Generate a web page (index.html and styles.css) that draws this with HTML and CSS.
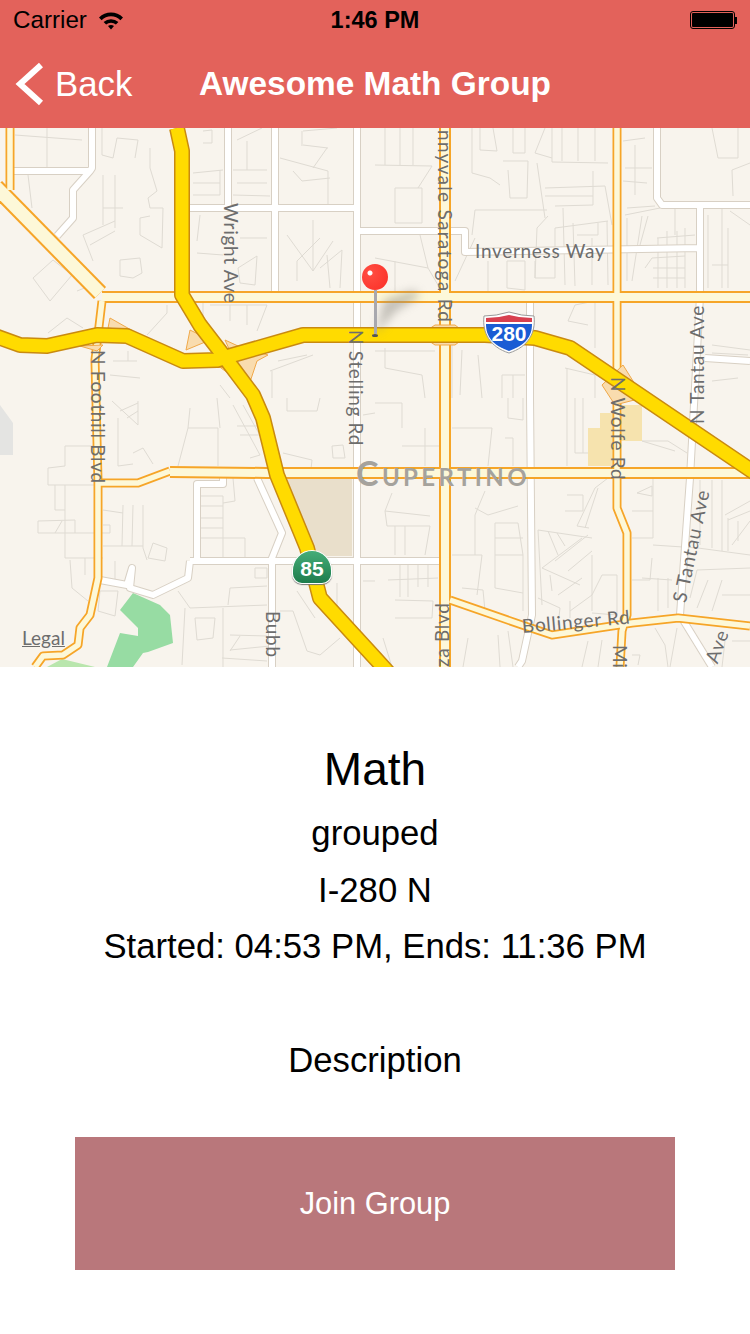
FILE: index.html
```html
<!DOCTYPE html>
<html lang="en">
<head>
    <meta charset="UTF-8">
    <meta name="viewport" content="width=device-width, initial-scale=1.0">
    <title>Awesome Math Group</title>
    <link rel="stylesheet" href="styles.css">
</head>
<body>
    <header class="top">
        <div class="status">
            <div class="status-left">
                <span class="carrier">Carrier</span>
                <svg class="wifi" width="26" height="19" viewBox="0 0 26 19">
                    <path d="M1 6.500 A17 17 0 0 1 25 6.500 L22.400 9.200 A13.400 13.400 0 0 0 3.600 9.200 Z"/>
                    <path d="M5.600 11 A11 11 0 0 1 20.400 11 L17.900 13.500 A7.600 7.600 0 0 0 8.100 13.500 Z"/>
                    <path d="M10 15 A5 5 0 0 1 16 15 L13 18.500 Z"/>
                </svg>
            </div>
            <div class="status-time">1:46 PM</div>
            <div class="status-right">
                <span class="battery"><span class="battery-fill"></span></span>
                <span class="battery-tip"></span>
            </div>
        </div>
        <nav class="navbar">
            <div class="back">
                <svg width="30" height="44" viewBox="0 0 30 44">
                    <path d="M27 3 L6 22 L27 41" fill="none" stroke="#fff" stroke-width="6"/>
                </svg>
                <span>Back</span>
            </div>
            <h1 class="nav-title">Awesome Math Group</h1>
        </nav>
    </header>

    <div class="map">
        <svg class="map-svg" width="750" height="539" viewBox="0 128 750 539">
            <defs>
                <g id="white-roads">
                    <path d="M13 171H90L92 168V128M90 171L73 190V218L57 236"/>
                    <path d="M190 208H358M228 128V208M275 128V296M357 128V667M357 231H465V252L700 248M700 203V296L692 441L690 478L680 615M657 128V198L662 205H750"/>
                    <path d="M530 300V398L532 615L522 661L518 667M705 358L750 361"/>
                    <path d="M190 561H442M197 561V484H223V478M100 580L127 585L132 568L130 588L153 595L188 578L190 561M257 478L282 533L272 558V667"/>
                    <path d="M680 615L712 667"/>
                </g>
                <g id="narrow-roads">
                    <path d="M10 128V190M102 301L95 360L98 481V578L90 615L80 628L78 645L63 655L43 656L35 667"/>
                    <path d="M617 128V508L627 533V615L622 631L620 667M450 600L522 625L552 635L632 623L678 618L750 626"/>
                    <path d="M98 483L138 483L170 471"/>
                </g>
                <g id="wide-roads">
                    <path d="M102 297H750M445 128V667M170 472L267 473H750"/>
                </g>
                <g id="diagonal-road">
                    <path d="M-4 187L100 293"/>
                </g>
                <g id="freeways">
                    <path d="M177 128L182 151V295L200 325L220 351L253 395L263 418L277 475L307 548L320 598L375 658L395 680"/>
                    <path d="M-5 336L20 345L47 346L97 335L127 336L183 361L217 360L233 355L303 335H485L535 338L570 348L755 473"/>
                </g>
            </defs>

            <!-- minor streets -->
            <g class="minor">
                <path d="M15 135L82 140M47 128V168M28 175L32 208M102 128V155L113 158L117 138L138 140L135 158M103 175V225M115 175V228M103 208H123M83 235L115 221M90 245L115 231M83 235L93 261"/>
                <path d="M150 148V168L157 191L148 198L150 208H163L162 248L140 235V218L150 216M120 260L140 258L142 273L133 278L120 276ZM33 278L53 260L72 275L50 301ZM77 291L92 285M147 335L167 313V305M48 333L67 318L83 328M110 375L140 378M113 361H137M128 351V361"/>
                <path d="M193 173L223 170M193 183H220M193 195H220M220 170V195M203 131L212 130V143H203M233 170H267M237 183H267M233 195L270 196M247 141V170M237 140L262 128M280 158L328 171M293 171L302 181L330 178M328 171V205M303 131L337 128M303 145L328 148M302 131V146M327 148L313 168"/>
                <path d="M200 215L197 241M197 253L223 255M240 238H267M238 268L257 256L255 285L240 283ZM287 235L313 271L333 241M313 220V271M297 281V261L320 238M320 268L342 250L340 288M327 255L330 288M203 303V321M210 305L267 305M230 305V321M247 305V325M267 305L257 331M270 371L313 355M272 371V398M278 361L307 355M220 385L230 398"/>
                <path d="M472 128V173L490 178L500 185M480 128V150L497 151L493 128M513 128V153H525V128M535 153L545 128M535 153L552 158M552 128V162L608 163M562 128V161M578 128V161M595 128V161M503 161H528L527 198H510L508 170M537 163L545 218M545 188L605 186M545 196H593M555 206L593 205M593 171V205M605 186L612 225"/>
                <path d="M475 210H547M475 210L472 235M548 216L537 228L535 278H555V228L608 221M563 208L565 285M573 223L575 286M577 235H598V223M592 238V285M607 221L608 285M395 188V223H422V188ZM375 165L432 166L418 188M385 128V165M413 128V165M400 128V165M375 258L428 268L438 285M420 235L428 268M395 261V291M488 261V291M507 261V288L525 290V261ZM535 261V278M475 238L455 281"/>
                <path d="M623 141L645 138M625 168H652M623 181L647 183M635 145V195M627 208L655 206M625 215L660 208M627 218V281M675 208V235M642 216L632 281M648 216L640 245M657 238L695 235M658 238V288M667 231V288M677 231V288M685 228V288M645 268L652 258L685 256M653 268H685M653 278H685M712 128L718 158H738V128M732 170L750 163M732 170L733 196M708 215V288M722 208V288M730 211L750 225M712 265H728M728 228V288"/>
                <path d="M568 321L575 305L595 301V348M568 321L588 325M565 368L595 375M567 368V398M595 375V398M452 341V398M385 348V368L422 375L425 398M375 351H435M462 350L460 395M478 355L482 398M502 375H525M502 375V398M513 375V398M712 345L750 350M712 353L748 355M712 381L738 378"/>
                <path d="M112 401L138 425V401M120 411L138 403M127 418L138 411M65 446V466L48 468V485H95M65 446H95M118 418V466L133 464M133 453L143 448L153 464M190 408L188 428L178 466M188 428H218V466M217 398L220 428M233 405L260 455M243 405L267 448M237 426H260M240 435H263M250 458L260 455M283 453L312 460L310 478M287 398V411H317L320 398M332 446L343 445L345 458H333ZM363 415L375 413"/>
                <path d="M55 485V510H65M65 485V558M38 521L75 520V533H38ZM55 533L62 521M75 533H110V525H103M65 558H103M70 560L72 588L88 601M85 558V575M115 561V580M103 510L123 513M123 505L122 546M133 505L132 546M143 505V548L147 560M103 546H143M153 543L167 548L165 561L148 558Z"/>
                <path d="M200 496H223V558M200 506H223M200 518H223M200 528H223M200 538H245V558M233 478L235 501L223 503M255 568H267V578H255ZM100 591H118L115 616L98 611ZM178 591L190 608L267 605M185 608L182 665M195 618H215L213 638L197 640ZM223 608V667M230 588L267 586M230 588L228 605M230 635L267 636M240 636L230 651M230 650L270 646M222 658L267 661M280 611H293L307 651L320 655L340 638M297 591L315 618M337 583V611M363 581H375"/>
                <path d="M375 403H402V428M508 398V418L523 420V398M452 428H492L488 466M505 438H513V466M567 398V466M575 398V453H593M583 398V453M402 446H442M425 428V466M392 493L385 511L430 516M385 511L387 526H430L425 555M395 526V555M405 526V555M485 491L475 515V555M475 508L488 515L518 506M495 523H518L523 555H495ZM495 538H523M452 555H482L477 595M495 555V588L523 593M523 555V611M462 588L483 590L485 611"/>
                <path d="M400 565V597M408 565V597M418 565V587M428 565V587M388 580L438 578M395 600L433 601L432 618H395M383 638L392 667M498 635L500 667M468 638L463 667M508 631L513 667M538 530L592 538M538 530L542 605M548 531L558 555M557 533L565 546M542 568L582 538M555 561L588 535M568 571L592 551M542 568L580 585M558 595L582 578M550 575L552 591M538 598L560 608L558 625M592 555V611M570 611L592 595L602 575H617V615M570 601V618M592 613L617 615"/>
                <path d="M589 528L577 526L595 488L608 478M585 528L598 488M567 495H583V511H565M632 511H653M632 538H653V478M652 558L650 580H632M637 493L652 486V496ZM642 441L675 451M642 441H668L687 453M700 480V545M712 480V548M722 480V551M698 548L750 555M653 545L698 548M725 515L750 501M728 520L750 511M728 518V551M738 521V541M750 521L732 545M697 570L750 568M697 570L690 598M708 580L697 608M722 580L712 611M722 595H750M658 578V611M668 578V608M642 578L672 580M588 641L582 667M602 640L598 667M632 655H640L638 665M655 628L665 645L668 667M677 628L670 667M725 641L722 667M732 641H750"/>
            </g>

            <!-- blocks of colour -->
            <path class="block-tan" d="M287 478H352V556H312Z"/>
            <path class="block-yellow" d="M588 428H600V413H622V405H642V441H620V466H588Z"/>
            <path class="block-grey" d="M0 405L13 423V455H0Z"/>
            <path class="block-green" d="M133 593L160 605L170 615L173 643L148 652L143 653L133 667H107L120 633L138 636V628L120 610Z"/>
            <path class="block-lightgreen" d="M47 667L62 659L95 667Z"/>

            <!-- roads, bottom to top -->
            <use href="#white-roads" class="street-edge"/>
            <use href="#white-roads" class="street-white"/>
            <use href="#narrow-roads" class="narrow-edge"/>
            <use href="#wide-roads" class="wide-edge"/>
            <use href="#diagonal-road" class="diagonal-edge"/>
            <use href="#narrow-roads" class="narrow-fill"/>
            <use href="#wide-roads" class="wide-fill"/>
            <use href="#diagonal-road" class="diagonal-fill"/>

            <path class="ramp" d="M110 318L133 331L108 328ZM80 346L103 345L97 351ZM190 330L186 350L210 340ZM225 340L238 346L268 355L257 361L250 382L235 362ZM192 366L217 365L240 382L232 368ZM420 335L435 325H455L468 335L455 345H435ZM602 385L623 365L633 381L642 398L615 405Z"/>

            <use href="#freeways" class="freeway-edge"/>
            <use href="#freeways" class="freeway-fill"/>

            <path class="pin-shadow" d="M376 334L384 300L414 290L420 296L395 312Z"/>
        </svg>

        <span class="road-label label-v wright">Wright Ave</span>
        <span class="road-label label-v sunnyvale">nnyvale Saratoga Rd</span>
        <span class="road-label label-v foothill">N Foothill Blvd</span>
        <span class="road-label label-v stelling">N Stelling Rd</span>
        <span class="road-label label-v wolfe">N Wolfe Rd</span>
        <span class="road-label label-u tantau">N Tantau Ave</span>
        <span class="road-label stantau">S Tantau Ave</span>
        <span class="road-label label-v bubb">Bubb</span>
        <span class="road-label label-u plaza">za Blvd</span>
        <span class="road-label label-v miller">Mi</span>
        <span class="road-label ave">Ave</span>
        <span class="road-label inverness">Inverness Way</span>
        <span class="road-label bollinger">Bollinger Rd</span>
        <span class="city">Cupertino</span>
        <span class="legal">Legal</span>

        <div class="shield-280">
            <svg width="54" height="43" viewBox="0 0 54 43">
                <path d="M2 5Q14 5 27 1Q40 5 52 5C54 22 46 36 27 42C8 36 0 22 2 5Z" fill="#fff" stroke="#9a9a9a"/>
                <path d="M4 7Q16 7 27 4Q38 7 50 7L50 11H4Z" fill="#d8404f"/>
                <path d="M4 13H50C50 25 44 34 27 40C10 34 4 25 4 13Z" fill="#1a5cd4"/>
            </svg>
            <span>280</span>
        </div>
        <div class="shield-85"><span>85</span></div>

        <div class="pin">
            <span class="pin-head"></span>
            <span class="pin-stem"></span>
            <span class="pin-foot"></span>
        </div>
    </div>

    <main class="info">
        <h2 class="subject">Math</h2>
        <p class="line">grouped</p>
        <p class="line">I-280 N</p>
        <p class="line">Started: 04:53 PM, Ends: 11:36 PM</p>
        <p class="line description">Description</p>
        <button class="join" type="button">Join Group</button>
    </main>
</body>
</html>
```

FILE: styles.css
```css
body {
    margin: 0;
    width: 750px;
    height: 1334px;
    overflow: hidden;
    background-color: #fff;
    font-family: "Liberation Sans", Arial, sans-serif;
    color: #000;
}

.top {
    height: 128px;
    background-color: #e3625b;
}

.status {
    display: flex;
    align-items: center;
    justify-content: space-between;
    height: 40px;
    padding: 0 13px;
    font-size: 23.5px;
}

.status-left {
    display: flex;
    align-items: center;
    gap: 11px;
    width: 200px;
}

.carrier {
    font-size: 24.2px;
}

.status-time {
    font-weight: bold;
}

.status-right {
    display: flex;
    align-items: center;
    justify-content: flex-end;
    width: 200px;
}

.battery {
    display: block;
    box-sizing: border-box;
    width: 45px;
    height: 18px;
    padding: 1px;
    border: 1px solid #000;
    border-radius: 3px;
}

.battery-fill {
    display: block;
    height: 100%;
    background-color: #000;
    border-radius: 1px;
}

.battery-tip {
    display: block;
    width: 2px;
    height: 7px;
    background-color: #000;
}

.navbar {
    position: relative;
    display: flex;
    align-items: center;
    height: 88px;
    color: #fff;
}

.back {
    display: flex;
    align-items: center;
    gap: 11px;
    padding-left: 14px;
    font-size: 34.8px;
}

.nav-title {
    position: absolute;
    left: 0;
    right: 0;
    margin: 0;
    font-size: 33.4px;
    font-weight: bold;
    text-align: center;
}

.map {
    position: relative;
    height: 539px;
    overflow: hidden;
    background-color: #f8f4ed;
}

.map-svg {
    display: block;
}

.map-svg path {
    fill: none;
    stroke-linejoin: round;
}

.minor {
    stroke: #dfdbd3;
    stroke-width: 1;
}

.street-edge {
    stroke: #d8d0c4;
    stroke-width: 8;
}

.street-white {
    stroke: #fff;
    stroke-width: 6;
}

.narrow-edge {
    stroke: #f6a528;
    stroke-width: 9;
}

.narrow-fill {
    stroke: #fdf8d8;
    stroke-width: 5.5;
}

.wide-edge {
    stroke: #f6a528;
    stroke-width: 12;
}

.wide-fill {
    stroke: #fdf8d8;
    stroke-width: 8;
}

.diagonal-edge {
    stroke: #f6a528;
    stroke-width: 17;
}

.diagonal-fill {
    stroke: #fdf8d8;
    stroke-width: 13;
}

.map-svg .ramp {
    fill: #f9dcae;
    stroke: #f0a94a;
    stroke-width: 1;
}

.freeway-edge {
    stroke: #c98a10;
    stroke-width: 16;
}

.freeway-fill {
    stroke: #ffdb00;
    stroke-width: 13;
}

.map-svg .block-tan {
    fill: #e9dfcb;
}

.map-svg .block-yellow {
    fill: #f6e3ae;
}

.map-svg .block-grey {
    fill: #e4e4e2;
}

.map-svg .block-green {
    fill: #97dca3;
}

.map-svg .block-lightgreen {
    fill: #b9e6ad;
}

.map-svg .pin-shadow {
    fill: #8f8c84;
    opacity: 0.5;
    filter: blur(5px);
}

.road-label {
    position: absolute;
    font-family: Lato, "Liberation Sans", sans-serif;
    font-size: 19px;
    line-height: 20px;
    letter-spacing: 0.7px;
    color: #6d6d6d;
    white-space: nowrap;
    transform-origin: left center;
}

.label-v {
    transform: rotate(90deg);
}

.label-u {
    transform: rotate(-90deg);
}

.wright { left: 231px; top: 65px; }
.sunnyvale { left: 445px; top: -8px; letter-spacing: 1.3px; }
.foothill { left: 98px; top: 212px; }
.stelling { left: 356px; top: 192px; }
.wolfe { left: 618px; top: 239px; }
.tantau { left: 697px; top: 286px; }
.stantau { left: 679px; top: 464px; transform: rotate(-78deg); }
.bubb { left: 273px; top: 473px; }
.plaza { left: 442px; top: 529px; }
.miller { left: 620px; top: 507px; }
.ave { left: 711px; top: 524px; transform: rotate(-70deg); }
.inverness { left: 475px; top: 113px; }
.bollinger { left: 522px; top: 488px; transform: rotate(-5deg); }

.city {
    position: absolute;
    left: 356px;
    top: 325px;
    font-family: Lato, "Liberation Sans", sans-serif;
    font-size: 34px;
    font-weight: bold;
    font-variant: small-caps;
    letter-spacing: 3.4px;
    line-height: 40px;
    color: #a5a29c;
}

.legal {
    position: absolute;
    left: 22px;
    top: 500px;
    font-family: Lato, "Liberation Sans", sans-serif;
    font-size: 19px;
    line-height: 20px;
    text-decoration: underline;
    color: #6d6d6d;
}

.shield-280 {
    position: absolute;
    left: 482px;
    top: 183px;
    width: 54px;
    height: 43px;
}

.shield-280 svg {
    display: block;
}

.shield-280 span {
    position: absolute;
    left: 0;
    right: 0;
    top: 12px;
    font-size: 21px;
    line-height: 22px;
    font-weight: bold;
    text-align: center;
    color: #fff;
}

.shield-85 {
    position: absolute;
    left: 292px;
    top: 422px;
    box-sizing: border-box;
    width: 40px;
    height: 34px;
    border: 1px solid #fff;
    border-radius: 50% 50% 10px 10px / 60% 60% 10px 10px;
    background: linear-gradient(#45ad78, #1f7d4d);
    box-shadow: 0 1px 1px #777;
    text-align: center;
}

.shield-85 span {
    font-size: 21px;
    line-height: 36px;
    font-weight: bold;
    color: #fff;
}

.pin {
    position: absolute;
    left: 362px;
    top: 136px;
    display: flex;
    flex-direction: column;
    align-items: center;
    width: 26px;
}

.pin-head {
    display: block;
    width: 26px;
    height: 26px;
    border-radius: 50%;
    background: radial-gradient(circle at 8px 9px, #fff 0, #fff 2px, #ff4a3f 3px, #fb2e26 100%);
}

.pin-stem {
    display: block;
    width: 3px;
    height: 44px;
    background-color: #a8a8ae;
}

.pin-foot {
    display: block;
    width: 6px;
    height: 3px;
    border-radius: 50%;
    background-color: #555;
}

.info {
    display: flex;
    flex-direction: column;
    align-items: center;
    padding-top: 75px;
}

.subject {
    margin: 0 0 17px;
    font-size: 46px;
    line-height: 54px;
    font-weight: normal;
}

.line {
    margin: 0 0 16.5px;
    font-size: 34.7px;
    line-height: 40px;
}

.description {
    margin: 57.5px 0 0;
}

.join {
    width: 600px;
    height: 133px;
    margin-top: 57px;
    border: none;
    background-color: #b9777b;
    color: #fff;
    font-family: inherit;
    font-size: 30.8px;
}
```
